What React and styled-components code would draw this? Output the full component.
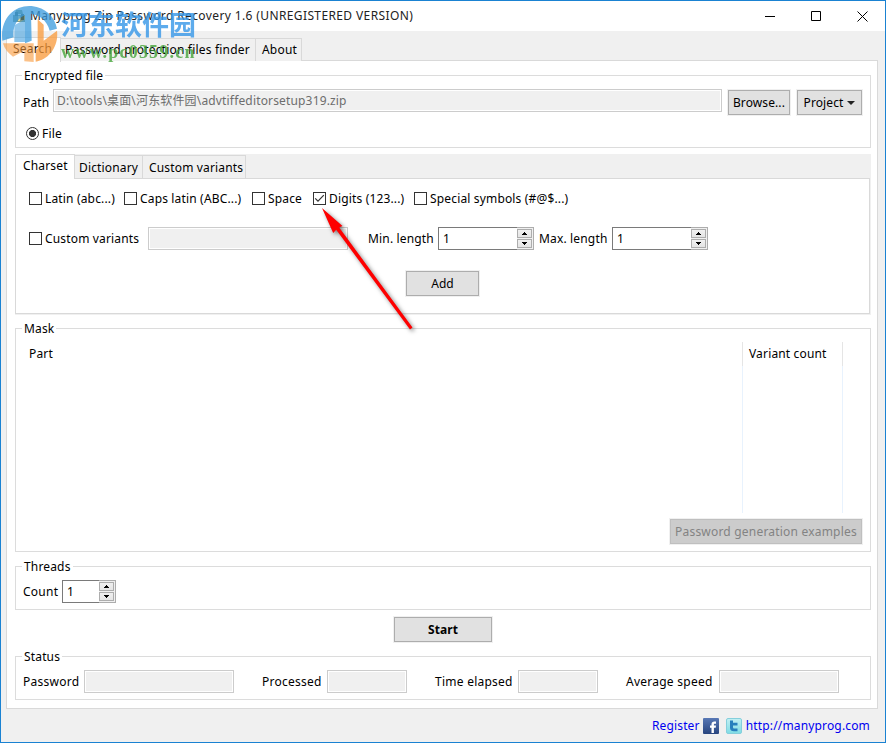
import React, { useState } from 'react'
import styled, { createGlobalStyle } from 'styled-components'

const charsets = [
    { id: 'latin', label: 'Latin (abc...)', width: 95 },
    { id: 'caps', label: 'Caps latin (ABC...)', width: 128 },
    { id: 'space', label: 'Space', width: 61 },
    { id: 'digits', label: 'Digits (123...)', width: 101 },
    { id: 'special', label: 'Special symbols (#@$...)', width: 170 },
]

const statuses = [
    { label: 'Password', labelWidth: 61, width: 150, gap: 28 },
    { label: 'Processed', labelWidth: 65, width: 80, gap: 28 },
    { label: 'Time elapsed', labelWidth: 83, width: 80, gap: 28 },
    { label: 'Average speed', labelWidth: 93, width: 120, gap: 0 },
]

function Check({ label, width, checked, onClick }) {
    return (
        <CheckLabel $width={width} onClick={onClick}>
            <Box>
                {checked && <svg width="11" height="11" viewBox="0 0 11 11">
                    <path d="M1.2 5.3 L4 8.2 L9.8 2.2" fill="none" stroke="#333" strokeWidth="1.2" />
                </svg>}
            </Box>
            <span>{label}</span>
        </CheckLabel>
    )
}

function Spin({ width }) {
    const [value, setValue] = useState(1)
    return (
        <SpinBox $width={width}>
            <SpinValue>{value}</SpinValue>
            <SpinButtons>
                <SpinButton onClick={() => setValue(value + 1)}>
                    <svg width="5" height="3"><path d="M2 0h1v1h1v1h1v1H0V2h1V1h1z" fill="#000" /></svg>
                </SpinButton>
                <SpinButton onClick={() => setValue(Math.max(1, value - 1))}>
                    <svg width="5" height="3"><path d="M0 0h5v1H4v1H3v1H2V2H1V1H0z" fill="#000" /></svg>
                </SpinButton>
            </SpinButtons>
        </SpinBox>
    )
}

function Watermark() {
    return (
        <Mark>
            <svg width="58" height="66" viewBox="0 0 174 198">
                <path d="M4 122 C-4 56 40 14 92 18 C134 22 162 52 168 86 L146 92 C138 62 116 44 90 42 L92 122 L72 130 L72 46 C46 56 34 84 38 112 Z" fill="#3b9bdd" />
                <path d="M40 76 L72 58 L72 126 L40 126 Z" fill="#3b9bdd" opacity=".75" />
                <path d="M110 58 L128 74 L128 122 L168 92 C174 140 142 180 104 185 L104 150 L110 146 Z" fill="#f99a3c" />
                <path d="M6 130 L98 130 L98 186 L70 184 L70 152 L36 170 C20 158 10 146 6 130 Z" fill="#f99a3c" opacity=".8" />
            </svg>
            <MarkText>
                <MarkName>河东软件园</MarkName>
                <MarkUrl>www.pc0359.cn</MarkUrl>
            </MarkText>
        </Mark>
    )
}

export default function App() {
    const [checked, setChecked] = useState({ digits: true })
    const toggle = (id) => setChecked({ ...checked, [id]: !checked[id] })

    return (
        <Window>
            <Global />
            <TitleBar>
                <svg width="16" height="16" viewBox="0 0 16 16">
                    <path d="M5 2h6l1 4H4z" fill="#8aa07b" />
                    <path d="M2 7h12v7H2z" fill="#7d9b8b" />
                    <path d="M4 4h3v4H4zM10 6h3v6h-3z" fill="#4d6a61" />
                    <path d="M7 8h2v5H7z" fill="#e8d98d" />
                </svg>
                <Title>Manyprog Zip Password Recovery 1.6 (UNREGISTERED VERSION)</Title>
                <Controls>
                    <svg width="11" height="11"><path d="M0 5.5h10" stroke="#000" /></svg>
                    <svg width="11" height="11"><path d="M.5.5h9v9h-9z" fill="none" stroke="#000" /></svg>
                    <svg width="11" height="11"><path d="M.5.5l10 10M10.5.5l-10 10" stroke="#000" /></svg>
                </Controls>
            </TitleBar>

            <MainTabs>
                <Tab $active $width={55} $pad={6}>Search</Tab>
                <Tab $width={195} $pad={4}>Password protection files finder</Tab>
                <Tab $width={46} $pad={6}>About</Tab>
            </MainTabs>

            <Page>
                <Group $height={82}>
                    <legend>Encrypted file</legend>
                    <PathRow>
                        <Label $width={30} $low>Path</Label>
                        <Field $width={669}>D:\tools\桌面\河东软件园\advtiffeditorsetup319.zip</Field>
                        <Button $width={62}>Browse...</Button>
                        <Button $width={65}>Project <Caret /></Button>
                    </PathRow>
                    <RadioRow>
                        <Radio />
                        <span>File</span>
                    </RadioRow>
                </Group>

                <Notebook>
                    <InnerTabs>
                        <Tab $active $width={60} $pad={7}>Charset</Tab>
                        <Tab $width={68} $pad={4} $low>Dictionary</Tab>
                        <Tab $width={103} $pad={6} $low>Custom variants</Tab>
                    </InnerTabs>
                    <Charset>
                        <Checks>
                            {charsets.map(item => <Check
                                key={item.id}
                                label={item.label}
                                width={item.width}
                                checked={checked[item.id]}
                                onClick={() => toggle(item.id)}
                            />)}
                        </Checks>
                        <LengthRow>
                            <Check label="Custom variants" width={119} checked={checked.custom} onClick={() => toggle('custom')} />
                            <Field $width={200} />
                            <Label $width={70} $left={20}>Min. length</Label>
                            <Spin width={96} />
                            <Label $width={73} $left={5}>Max. length</Label>
                            <Spin width={96} />
                        </LengthRow>
                        <AddRow>
                            <Button $width={73}>Add</Button>
                        </AddRow>
                    </Charset>
                </Notebook>

                <Group $height={233} $top={4}>
                    <legend>Mask</legend>
                    <Table>
                        <Column><ColumnHead $pad={5}>Part</ColumnHead></Column>
                        <Column $width={100}><ColumnHead $pad={6}>Variant count</ColumnHead></Column>
                        <Rest />
                    </Table>
                    <Examples>
                        <Button $width={192} $wide disabled>Password generation examples</Button>
                    </Examples>
                </Group>

                <Group $height={53} $top={5}>
                    <legend>Threads</legend>
                    <Fields>
                        <Label $width={39}>Count</Label>
                        <Spin width={54} />
                    </Fields>
                </Group>

                <StartRow>
                    <Button $width={98} $bold>Start</Button>
                </StartRow>

                <Group $height={53}>
                    <legend>Status</legend>
                    <Fields>
                        {statuses.map(item => <React.Fragment key={item.label}>
                            <Label $width={item.labelWidth}>{item.label}</Label>
                            <Field $width={item.width} $right={item.gap} />
                        </React.Fragment>)}
                    </Fields>
                </Group>
            </Page>

            <Footer>
                <a>Register</a>
                <svg width="16" height="16" viewBox="0 0 16 16">
                    <defs>
                        <linearGradient id="fb" x2="0" y2="1"><stop stopColor="#5878b5" /><stop offset="1" stopColor="#28457f" /></linearGradient>
                    </defs>
                    <rect width="16" height="16" rx="1" fill="url(#fb)" />
                    <path d="M8.500 15V9.800H7V7.500h1.500V6.300C8.500 4.300 9.700 3.500 11.300 3.500h1.700v2.200h-1.100c-.8 0-1 .3-1 .9v.9h2.100l-.3 2.300h-1.800V15z" fill="#fff" />
                </svg>
                <svg width="16" height="16" viewBox="0 0 16 16">
                    <defs>
                        <linearGradient id="tw" x2="0" y2="1"><stop stopColor="#c2eff3" /><stop offset="1" stopColor="#7edce5" /></linearGradient>
                    </defs>
                    <rect x=".5" y=".5" width="15" height="15" rx="1.500" fill="url(#tw)" stroke="#85cfdc" />
                    <path d="M4 2.500h3v2.300h4.500v2.700H7v1.700c0 .9.500 1.300 1.300 1.300h3.200v2.800H8c-2.500 0-4-1.300-4-3.600z" fill="#2880bd" />
                </svg>
                <a>http://manyprog.com</a>
            </Footer>

            <Watermark />
            <Arrow width="110" height="140" viewBox="0 0 110 140">
                <path d="M10 8 L30.500 26 L27.200 27.500 L100.500 127.500 L98 129.500 L24.200 29.800 L21.200 33 Z" fill="#fe0000" />
            </Arrow>
        </Window>
    )
}

const Global = createGlobalStyle`
    body {
        margin: 0;
    }

    * {
        box-sizing: border-box;
    }
`

const Window = styled.div`
    position: relative;
    display: flex;
    flex-direction: column;
    width: 886px;
    height: 743px;
    overflow: hidden;
    border: 1px solid #1a82d2;
    background: #f0f0f0;
    color: #000;
    font: 12px/18px "Noto Sans", "Noto Sans CJK SC", sans-serif;
    letter-spacing: 0.16px;
    white-space: nowrap;
`

const TitleBar = styled.div`
    display: flex;
    align-items: center;
    height: 30px;
    padding: 0 17px 0 10px;
    background: #fff;
`

const Title = styled.div`
    margin-left: 3px;
    color: #222;
    letter-spacing: 0.38px;
`

const Controls = styled.div`
    display: flex;
    gap: 35px;
    margin-left: auto;
`

const MainTabs = styled.div`
    display: flex;
    align-items: flex-end;
    height: 30px;
    padding-left: 5px;
    letter-spacing: 0.2px;
`

const Tab = styled.div`
    flex: none;
    width: ${({ $width }) => $width}px;
    height: ${({ $active }) => $active ? 25 : 23}px;
    margin-bottom: ${({ $active }) => $active ? -1 : 0}px;
    padding: ${({ $low }) => $low ? 3 : 2}px 0 0 ${({ $pad }) => $pad}px;
    border: 1px solid #d9d9d9;
    border-width: ${({ $active }) => $active ? '1px 1px 0 1px' : '1px 1px 0 0'};
    background: ${({ $active }) => $active ? '#fff' : '#f0f0f0'};
    z-index: 1;
`

const Page = styled.div`
    width: 872px;
    height: 649px;
    margin: -1px 0 0 5px;
    padding: 5px 6px 0 8px;
    border: 1px solid #d9d9d9;
    background: #fff;
`

const Group = styled.fieldset`
    height: ${({ $height }) => $height}px;
    min-width: 0;
    margin: ${({ $top }) => $top || 0}px 0 0;
    padding: 0;
    border: 1px solid #dcdcdc;

    legend {
        height: 18px;
        margin-left: 6px;
        padding: 0 2px;
        line-height: 20px;
    }
`

const PathRow = styled.div`
    display: flex;
    height: 26px;
    padding-left: 7px;
    margin-top: 5px;

    button {
        margin: 1px 0 0 6px;
    }

    button + button {
        margin-left: 7px;
    }
`

const Label = styled.div`
    flex: none;
    width: ${({ $width }) => $width}px;
    margin-left: ${({ $left }) => $left || 0}px;
    line-height: ${({ $low }) => $low ? 27 : 24}px;
`

const Field = styled.div`
    flex: none;
    width: ${({ $width }) => $width}px;
    height: 23px;
    margin-right: ${({ $right }) => $right || 0}px;
    padding-left: 3px;
    border: 1px solid #ccc;
    box-shadow: inset 0 0 0 1px #fff;
    background: #f0f0f0;
    color: #6d6d6d;
    line-height: 21px;
`

const Button = styled.button`
    display: flex;
    flex: none;
    align-items: center;
    justify-content: center;
    width: ${({ $width }) => $width}px;
    height: 25px;
    padding: 0;
    border: 1px solid #adadad;
    box-shadow: 0 0 0 1px #f0f0f0;
    background: #e1e1e1;
    color: #000;
    font: inherit;
    font-weight: ${({ $bold }) => $bold ? 700 : 400};
    letter-spacing: ${({ $wide }) => $wide ? 0.2 : 0.1}px;

    &:disabled {
        border-color: #bfbfbf;
        background: #ccc;
        color: #838383;
    }
`

const Caret = styled.i`
    margin-left: 4px;
    border: 4px solid transparent;
    border-top-color: #222;
    border-bottom: 0;
`

const RadioRow = styled.div`
    display: flex;
    align-items: center;
    gap: 3px;
    margin: 8px 0 0 10px;

    span {
        padding-top: 2px;
    }
`

const Radio = styled.div`
    width: 13px;
    height: 13px;
    border: 1px solid #333;
    border-radius: 50%;
    background: radial-gradient(circle, #333 3.2px, #fff 3.9px);
`

const Notebook = styled.div`
    height: 161px;
    margin-top: 6px;
    padding: 0 1px 1px 0;
    background: #f0f0f0;
`

const InnerTabs = styled.div`
    display: flex;
    align-items: flex-end;
    height: 24px;
`

const Charset = styled.div`
    height: 136px;
    padding: 12px 0 0 13px;
    border: 1px solid #d9d9d9;
    background: #fff;
`

const Checks = styled.div`
    display: flex;
    height: 16px;
`

const CheckLabel = styled.div`
    display: flex;
    flex: none;
    align-items: center;
    gap: 3px;
    width: ${({ $width }) => $width}px;
`

const Box = styled.div`
    display: flex;
    flex: none;
    width: 13px;
    height: 13px;
    margin-bottom: 2px;
    border: 1px solid #333;
    background: #fff;
`

const LengthRow = styled.div`
    display: flex;
    margin-top: 20px;
`

const SpinBox = styled.div`
    display: flex;
    flex: none;
    width: ${({ $width }) => $width}px;
    height: 23px;
    border: 1px solid #7a7a7a;
    border-right: 0;
`

const SpinValue = styled.div`
    flex: 1;
    padding-left: 4px;
    line-height: 21px;
`

const SpinButtons = styled.div`
    display: flex;
    flex-direction: column;
    gap: 1px;
    width: 17px;
    margin: -1px 0;
    padding: 1px 1px 1px 0;
    border: 1px solid #adadad;
    border-left: 0;
    background: #f0f0f0;
`

const SpinButton = styled.div`
    display: flex;
    flex: 1;
    align-items: center;
    justify-content: center;
    border: 1px solid #adadad;
    background: linear-gradient(#f0f0f0, #e5e5e5);
`

const AddRow = styled.div`
    display: flex;
    justify-content: center;
    margin-top: 20px;
    padding-right: 13px;
`

const Table = styled.div`
    display: flex;
    height: 171px;
    margin: 5px 8px 0;
`

const Column = styled.div`
    flex: ${({ $width }) => $width ? `0 0 ${$width}px` : 1};
    border-right: 1px solid #e8f2fd;
`

const ColumnHead = styled.div`
    height: 24px;
    margin-right: -1px;
    padding-left: ${({ $pad }) => $pad}px;
    border-right: 1px solid #e5e5e5;
    line-height: 24px;
`

const Rest = styled.div`
    width: 19px;
`

const Examples = styled.div`
    display: flex;
    justify-content: flex-end;
    margin: 6px 8px 0 0;
`

const Fields = styled.div`
    display: flex;
    margin: 5px 0 0 7px;
    letter-spacing: 0.25px;
`

const StartRow = styled.div`
    display: flex;
    justify-content: center;
    height: 37px;
    padding-top: 7px;
`

const Footer = styled.div`
    display: flex;
    flex: 1;
    align-items: center;
    justify-content: flex-end;
    padding: 1px 15px 0 0;

    a {
        color: #0000f0;
    }

    svg {
        margin: 0 4px 0 3px;
    }
`

const Mark = styled.div`
    position: absolute;
    top: -1px;
    left: 0;
    display: flex;
    opacity: 0.8;
    z-index: 2;
    pointer-events: none;

    svg {
        opacity: 0.95;
    }
`

const MarkText = styled.div`
    padding: 7px 0 0 2px;
`

const MarkName = styled.div`
    color: #3597e8;
    font: 700 27px/34px "Noto Sans CJK SC", sans-serif;
    letter-spacing: 0;
`

const MarkUrl = styled.div`
    margin-top: 1px;
    color: #45a53a;
    font: 700 18px/20px "Liberation Serif", serif;
    letter-spacing: 1.2px;
`

const Arrow = styled.svg`
    position: absolute;
    top: 199px;
    left: 311px;
    filter: drop-shadow(2px 2px 2px rgba(0, 0, 0, 0.5));
    pointer-events: none;
    z-index: 2;
`
